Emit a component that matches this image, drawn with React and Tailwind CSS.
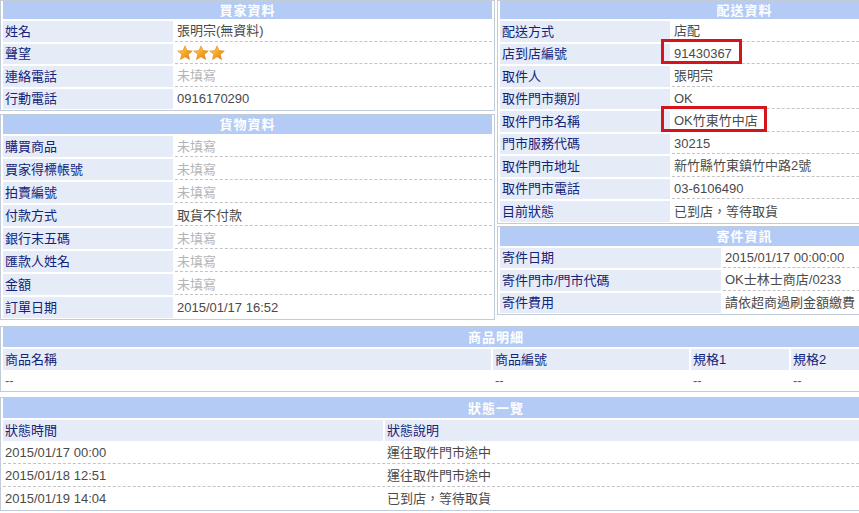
import React from 'react';

const EMPTY = '未填寫';

const buyer = [
  ['姓名', '張明宗(無資料)'],
  ['聲望', 'stars'],
  ['連絡電話', EMPTY],
  ['行動電話', '0916170290'],
];

const goods = [
  ['購買商品', EMPTY],
  ['買家得標帳號', EMPTY],
  ['拍賣編號', EMPTY],
  ['付款方式', '取貨不付款'],
  ['銀行末五碼', EMPTY],
  ['匯款人姓名', EMPTY],
  ['金額', EMPTY],
  ['訂單日期', '2015/01/17 16:52'],
];

const delivery = [
  ['配送方式', '店配'],
  ['店到店編號', '91430367'],
  ['取件人', '張明宗'],
  ['取件門市類別', 'OK'],
  ['取件門市名稱', 'OK竹東竹中店'],
  ['門市服務代碼', '30215'],
  ['取件門市地址', '新竹縣竹東鎮竹中路2號'],
  ['取件門市電話', '03-6106490'],
  ['目前狀態', '已到店，等待取貨'],
];

const sending = [
  ['寄件日期', '2015/01/17 00:00:00'],
  ['寄件門市/門市代碼', 'OK士林士商店/0233'],
  ['寄件費用', '請依超商過刷金額繳費'],
];

const statuses = [
  ['2015/01/17 00:00', '運往取件門市途中'],
  ['2015/01/18 12:51', '運往取件門市途中'],
  ['2015/01/19 14:04', '已到店，等待取貨'],
];

const Star = () => (
  <svg width="16" height="16" viewBox="0 0 16 16">
    <defs>
      <linearGradient id="sg" x1="0" y1="0" x2="1" y2="1">
        <stop offset="0" stopColor="#ffe27a" />
        <stop offset="0.5" stopColor="#f7a81e" />
        <stop offset="1" stopColor="#e7760c" />
      </linearGradient>
    </defs>
    <polygon
      points="8,0.8 10.1,5.6 15.3,6 11.3,9.4 12.6,14.6 8,11.8 3.4,14.6 4.7,9.4 0.7,6 5.9,5.6"
      fill="url(#sg)"
      stroke="#d9780f"
      strokeWidth="0.5"
    />
  </svg>
);

const Header = ({ title, h = 'h-[18px]' }) => (
  <div className={`${h} bg-[#b4cbf6] flex items-center justify-center text-white font-bold text-[13px] tracking-[1px]`}>
    {title}
  </div>
);

const Rows = ({ rows, labelW, rowH }) =>
  rows.map(([label, value], i) => (
    <div key={label} className={`flex gap-[2px] ${rowH}`}>
      <div className={`${labelW} shrink-0 bg-[#e5ecf8] text-[#13237a] flex items-center pl-[2px]`}>{label}</div>
      <div
        className={`flex-1 flex items-center pl-[2px] ${i < rows.length - 1 ? 'border-b border-dashed border-[#c4c4c4]' : ''} ${
          value === EMPTY ? 'text-[#b4b4b4]' : 'text-[#4a4a4a]'
        }`}
      >
        {value === 'stars' ? (
          <span className="flex">
            <Star />
            <Star />
            <Star />
          </span>
        ) : (
          value
        )}
      </div>
    </div>
  ));

const Box = ({ className = '', children }) => (
  <div className={`border border-[#c2ccd9] px-[2px] pb-px flex flex-col gap-[2px] ${className}`}>{children}</div>
);

export default function App() {
  return (
    <div className="relative w-[859px] h-[513px] overflow-hidden bg-white text-[13px] leading-none font-['Liberation_Sans','Noto_Sans_CJK_TC',sans-serif]">
      <div className="w-[992px] flex flex-col">
        <div className="flex gap-[2px] items-start">
          <div className="w-[495px] flex flex-col gap-[3px]">
            <Box>
              <Header title="買家資料" />
              <Rows rows={buyer} labelW="w-[170px]" rowH="h-[20.5px]" />
            </Box>
            <Box>
              <Header title="貨物資料" h="h-[19px]" />
              <Rows rows={goods} labelW="w-[170px]" rowH="h-[21px]" />
            </Box>
          </div>
          <div className="w-[495px] flex flex-col gap-[2px]">
            <Box>
              <Header title="配送資料" />
              <Rows rows={delivery} labelW="w-[170px]" rowH="h-[20.5px]" />
            </Box>
            <Box>
              <Header title="寄件資訊" h="h-[19px]" />
              <Rows rows={sending} labelW="w-[221px]" rowH="h-[20.5px]" />
            </Box>
          </div>
        </div>

        <div className="mt-[6px] border border-[#c2ccd9] px-[2px] flex flex-col">
          <Header title="商品明細" h="h-[20px]" />
          <div className="mt-[2px] h-[21px] flex gap-[2px] text-[#13237a]">
            <div className="w-[488px] bg-[#e5ecf8] flex items-center pl-[2px]">商品名稱</div>
            <div className="w-[196px] bg-[#e5ecf8] flex items-center pl-[2px]">商品編號</div>
            <div className="w-[98px] bg-[#e5ecf8] flex items-center pl-[2px]">規格1</div>
            <div className="flex-1 bg-[#e5ecf8] flex items-center pl-[2px]">規格2</div>
          </div>
          <div className="h-[21px] flex gap-[2px] text-[#5a5a5a]">
            <div className="w-[488px] flex items-center pl-[2px]">--</div>
            <div className="w-[196px] flex items-center pl-[2px]">--</div>
            <div className="w-[98px] flex items-center pl-[2px]">--</div>
            <div className="flex-1 flex items-center pl-[2px]">--</div>
          </div>
        </div>

        <div className="mt-[5px] border border-[#c2ccd9] px-[2px] flex flex-col">
          <Header title="狀態一覽" h="h-[20px]" />
          <div className="mt-[2px] h-[21px] flex gap-[2px] text-[#13237a]">
            <div className="w-[380px] bg-[#e5ecf8] flex items-center pl-[2px]">狀態時間</div>
            <div className="flex-1 bg-[#e5ecf8] flex items-center pl-[2px]">狀態說明</div>
          </div>
          {statuses.map(([time, desc], i) => (
            <div
              key={time}
              className={`h-[23px] flex gap-[2px] text-[#4a4a4a] ${i < statuses.length - 1 ? 'border-b border-dashed border-[#c4c4c4]' : ''}`}
            >
              <div className="w-[380px] flex items-center pl-[2px]">{time}</div>
              <div className="flex-1 flex items-center pl-[2px]">{desc}</div>
            </div>
          ))}
        </div>
      </div>

      <div className="absolute left-[661px] top-[39px] w-[81px] h-[25px] border-[3px] border-[#d5141c]" />
      <div className="absolute left-[661px] top-[106px] w-[106px] h-[26px] border-[3px] border-[#d5141c]" />
    </div>
  );
}
